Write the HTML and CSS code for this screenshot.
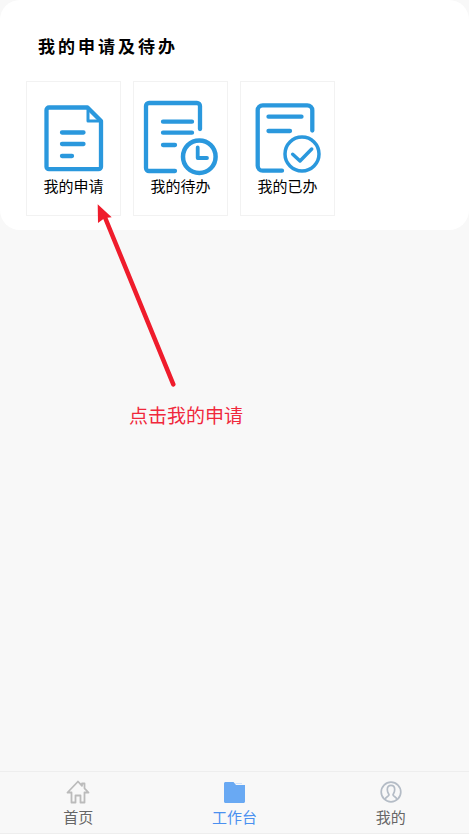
FILE: index.html
```html
<!DOCTYPE html>
<html lang="zh-CN">
<head>
<meta charset="utf-8">
<title>我的申请及待办</title>
<link rel="stylesheet" href="styles.css">
</head>
<body>
<div class="page">
  <section class="panel">
    <h1 class="panel-title">我的申请及待办</h1>
    <div class="tiles">
      <div class="tile">
        <svg class="tile-icon" viewBox="0 0 93 94" fill="none" stroke="#2a98dd" stroke-width="4.300" stroke-linecap="round" stroke-linejoin="round">
          <path d="M60.500 25.500H22a2.500 2.500 0 0 0-2.500 2.500V84.700a2.500 2.500 0 0 0 2.500 2.500H71.500a2.500 2.500 0 0 0 2.500-2.500V39L60.500 25.500Z"/>
          <path d="M61 26V39H73.500" stroke-width="3"/>
          <path d="M35 50.500H56.500M35 62H56.500M35 74H45"/>
        </svg>
        <span class="tile-label">我的申请</span>
      </div>
      <div class="tile">
        <svg class="tile-icon" viewBox="0 0 93 94" fill="none" stroke="#2a98dd" stroke-width="4.300" stroke-linecap="round" stroke-linejoin="round">
          <path d="M66 47V24a3 3 0 0 0-3-3H15a3 3 0 0 0-3 3V86a3 3 0 0 0 3 3H41"/>
          <path d="M29 39.700H58M29 50.700H58M29 63H41"/>
          <circle cx="65.300" cy="74.700" r="16.300" stroke-width="4.500"/>
          <path d="M63.700 65.500V76H73" stroke-width="3.800"/>
        </svg>
        <span class="tile-label">我的待办</span>
      </div>
      <div class="tile">
        <svg class="tile-icon" viewBox="0 0 93 94" fill="none" stroke="#2a98dd" stroke-width="4.300" stroke-linecap="round" stroke-linejoin="round">
          <path d="M71.300 48.500V28.300a5 5 0 0 0-5-5H21.700a5 5 0 0 0-5 5V83.700a5 5 0 0 0 5 5H41"/>
          <path d="M27.500 34.700H60.500M27.500 49H49"/>
          <circle cx="61" cy="72" r="17" stroke-width="3.500"/>
          <path d="M51.700 72.300L59 79L70.700 67" stroke-width="3.500"/>
        </svg>
        <span class="tile-label">我的已办</span>
      </div>
    </div>
  </section>

  <main class="workspace"></main>

  <nav class="tabbar">
    <div class="tab">
      <svg class="tab-icon" viewBox="0 0 24 24" fill="none" stroke="#bbbbbb" stroke-width="1.800" stroke-linejoin="round">
        <path d="M12 1.500L1.500 12.500H5.500V22.500H9.500V15.500H14.500V22.500H18.500V12.500H22.500L18.500 8.300V3.500H16V5.800Z"/>
      </svg>
      <span class="tab-label">首页</span>
    </div>
    <div class="tab tab-active">
      <svg class="tab-icon" viewBox="0 0 24 24">
        <path fill="#69a9f3" d="M2 3.500C2 2.700 2.700 2 3.500 2H11.500L14 5H23V21.500C23 22.300 22.300 23 21.500 23H3.500C2.700 23 2 22.300 2 21.500Z"/>
        <path fill="#cfe2fb" d="M13 3H20V4H13.800Z"/>
      </svg>
      <span class="tab-label">工作台</span>
    </div>
    <div class="tab">
      <svg class="tab-icon" viewBox="0 0 24 24" fill="none" stroke="#b4bcc6" stroke-width="1.700">
        <circle cx="12" cy="12" r="9.800"/>
        <path d="M6 19.500C6.500 16.800 9.800 16.500 10 15C10.100 14 8.300 13 8.300 9.500C8.300 6.800 9.800 5.300 12 5.300C14.200 5.300 15.700 6.800 15.700 9.500C15.700 13 13.900 14 14 15C14.200 16.500 17.500 16.800 18 19.500"/>
      </svg>
      <span class="tab-label">我的</span>
    </div>
  </nav>

  <svg class="callout-arrow" viewBox="0 0 469 834" aria-hidden="true">
    <path d="M173.300 384.300L104 215" fill="none" stroke="#ef1c2c" stroke-width="4.500" stroke-linecap="round"/>
    <path d="M97.700 204.300L98 223L104.700 218L111.700 217.300Z" fill="#ef1c2c"/>
  </svg>
  <div class="callout-text">点击我的申请</div>
</div>
</body>
</html>
```

FILE: styles.css
```css
* {
  box-sizing: border-box;
}

html,
body {
  margin: 0;
  padding: 0;
}

body {
  font-family: "Noto Sans CJK SC", "Noto Sans", sans-serif;
  background: #f8f8f8;
  color: #000;
}

.page {
  position: relative;
  display: flex;
  flex-direction: column;
  width: 469px;
  height: 834px;
  overflow: hidden;
}

.panel {
  height: 230px;
  padding: 35px 26px 0;
  background: #fff;
  border-radius: 20px;
}

.panel-title {
  margin: 0 0 24px 12px;
  font-size: 17px;
  line-height: 22px;
  font-weight: 700;
  letter-spacing: 3px;
}

.tiles {
  display: flex;
  gap: 12px;
}

.tile {
  display: flex;
  flex-direction: column;
  align-items: center;
  width: 95px;
  height: 135px;
  border: 1px solid #f2f2f2;
}

.tile-icon {
  display: block;
  width: 93px;
  height: 94px;
  flex: none;
}

.tile-label {
  font-size: 15px;
  line-height: 20px;
  white-space: nowrap;
}

.workspace {
  flex: 1;
}

.tabbar {
  display: grid;
  grid-template-columns: repeat(3, 1fr);
  height: 63px;
  padding-top: 8px;
  border-top: 1px solid #eeeeee;
  border-bottom: 1px solid #eeeeee;
  background: #f8f8f8;
}

.tab {
  display: flex;
  flex-direction: column;
  align-items: center;
  gap: 3px;
  color: #666;
}

.tab-active {
  color: #4a90f0;
}

.tab-icon {
  display: block;
  width: 24px;
  height: 24px;
  flex: none;
}

.tab-label {
  font-size: 15px;
  line-height: 20px;
}

.callout-arrow {
  position: absolute;
  inset: 0;
  width: 469px;
  height: 834px;
  pointer-events: none;
}

.callout-text {
  position: absolute;
  left: 129px;
  top: 402px;
  font-size: 19px;
  line-height: 26px;
  color: #f0283c;
  white-space: nowrap;
}
```
